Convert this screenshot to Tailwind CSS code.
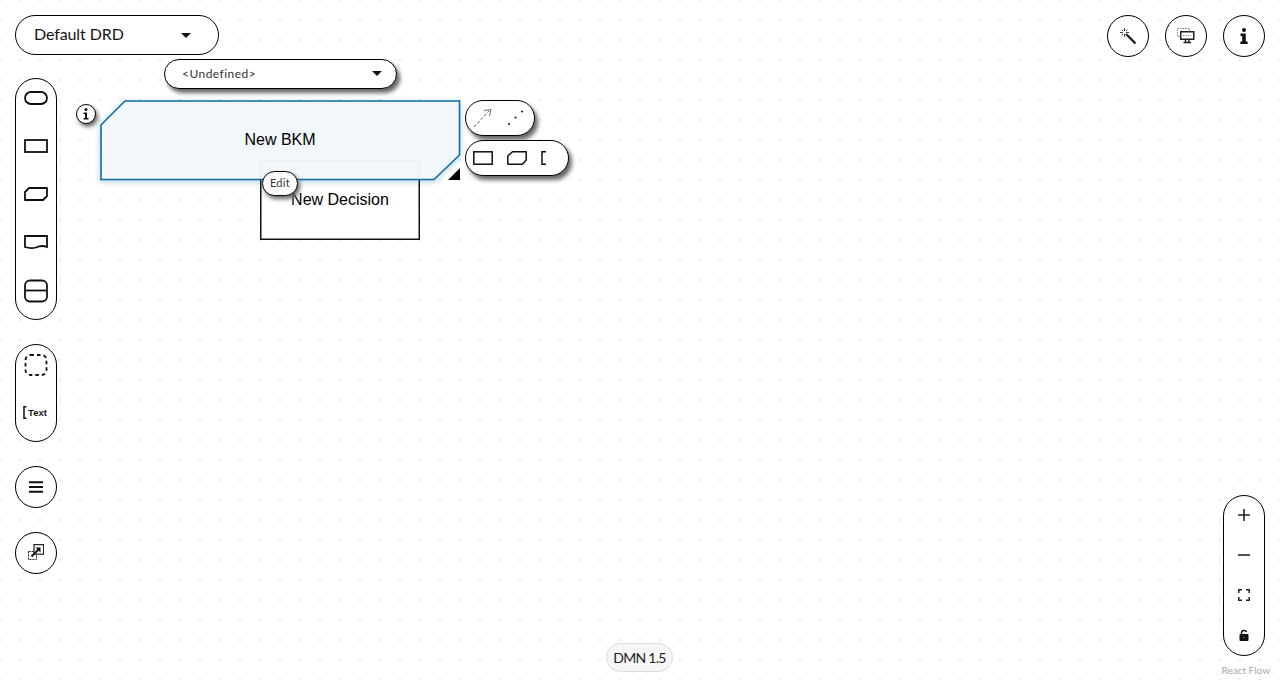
<!DOCTYPE html>
<html lang="en">
<head>
  <meta charset="UTF-8" />
  <title>DMN Editor</title>
  <script src="https://cdn.jsdelivr.net/npm/@tailwindcss/browser@4"></script>
</head>
<body class="bg-white text-[#151515] font-['Lato',sans-serif]">

<div class="relative w-[1280px] h-[680px] overflow-hidden bg-white bg-[radial-gradient(circle,#e9e9e9_1px,transparent_1px)] bg-[size:20px_20px] bg-[position:-10px_-10px]">

  <!-- Nodes on the canvas -->
  <svg class="absolute left-0 top-0" width="1280" height="680">
    <rect x="260.75" y="160.75" width="158.5" height="78.5" fill="#fff" stroke="#111" stroke-width="1.5"/>
    <polygon points="101,125 125,101 459.5,101 459.5,155 434,179.5 101,179.5" fill="#f5f9fc" fill-opacity="0.96" stroke="#0d6ea8" stroke-width="1.6" style="filter: drop-shadow(0 2px 3px rgba(13,110,168,.3))"/>
    <polygon points="448,180 460,180 460,168" fill="#000"/>
  </svg>
  <div class="absolute left-[100px] top-[100px] w-[360px] h-[80px] flex items-center justify-center font-['Liberation_Sans',sans-serif] text-base text-black">New BKM</div>
  <div class="absolute left-[260px] top-[180px] w-[160px] pt-[8px] text-center font-['Liberation_Sans',sans-serif] text-base text-black">New Decision</div>

  <!-- DRD selector -->
  <div class="absolute left-[15px] top-[15px] w-[204px] h-[40px] border border-black rounded-[20px] bg-white flex items-center justify-between pl-[18px] pr-[27px] text-base tracking-[-0.1px]">
    <span class="-mt-[2px]">Default DRD</span>
    <span class="w-0 h-0 border-x-[5px] border-x-transparent border-t-[5px] border-t-[#151515]"></span>
  </div>

  <!-- Left palette -->
  <div class="absolute left-[15px] top-[78px] flex flex-col gap-[24px] w-[42px]">
    <div class="h-[242px] border border-black rounded-[21px] bg-white flex flex-col items-center gap-[10px]">
      <div class="h-[38px] flex items-center"><svg width="24" height="14" viewBox="0 0 24 14"><rect x="1" y="1" width="22" height="12" rx="6" fill="none" stroke="#111" stroke-width="1.8"/></svg></div>
      <div class="h-[38px] flex items-center"><svg width="24" height="14" viewBox="0 0 24 14"><rect x="1" y="1" width="22" height="12" fill="none" stroke="#111" stroke-width="1.8"/></svg></div>
      <div class="h-[38px] flex items-center"><svg width="24" height="14" viewBox="0 0 24 14"><path d="M5 1H23V9L19 13H1V5Z" fill="none" stroke="#111" stroke-width="1.8" stroke-linejoin="round"/></svg></div>
      <div class="h-[38px] flex items-center"><svg width="24" height="14" viewBox="0 0 24 14"><path d="M1 1H23V12C18 10 15 11 12 12.5C8 13.5 4 13 1 12Z" fill="none" stroke="#111" stroke-width="1.8"/></svg></div>
      <div class="h-[40px] flex items-center"><svg width="24" height="24" viewBox="0 0 24 24"><rect x="1" y="1.5" width="22" height="21" rx="5" fill="none" stroke="#111" stroke-width="1.8"/><path d="M1 11.5H23" stroke="#111" stroke-width="1.8"/></svg></div>
    </div>
    <div class="h-[98px] border border-black rounded-[21px] bg-white flex flex-col items-center pt-[1px] gap-[9px]">
      <div class="h-[38px] flex items-center"><svg width="24" height="24" viewBox="0 0 24 24"><rect x="1.5" y="2" width="21" height="20" rx="5" fill="none" stroke="#111" stroke-width="1.8" stroke-dasharray="3.5 3"/></svg></div>
      <div class="h-[38px] flex items-center gap-[1px] -ml-[2px]">
        <svg width="4" height="13" viewBox="0 0 4 13"><path d="M3.5 .7H1V12.3H3.5" fill="none" stroke="#111" stroke-width="1.5"/></svg>
        <span class="text-[9.5px] font-bold leading-none font-['Liberation_Sans',sans-serif] mt-[1px]">Text</span>
      </div>
    </div>
    <div class="h-[42px] border border-black rounded-full bg-white flex items-center justify-center">
      <svg width="14" height="12" viewBox="0 0 14 12"><path d="M0 1.2H14M0 6H14M0 10.8H14" stroke="#111" stroke-width="2"/></svg>
    </div>
    <div class="h-[42px] border border-black rounded-full bg-white flex items-center justify-center">
      <svg class="-mt-[3px]" width="16" height="16" viewBox="0 0 16 16"><rect x=".5" y="7.5" width="8" height="8" fill="none" stroke="#222" stroke-width="1" stroke-dasharray="2 1"/><rect x="6" y=".6" width="9.6" height="9.6" fill="#fff" stroke="#222" stroke-width="1.2"/><path d="M3.5 12.5L11 5" stroke="#111" stroke-width="2"/><path d="M7.5 3.5H12.5V8.5Z" fill="#111"/></svg>
    </div>
  </div>

  <!-- Node selector -->
  <div class="absolute left-[164px] top-[59px] w-[233px] h-[30px] border border-black rounded-[15px] bg-white shadow-[3px_4px_4px_#666] flex items-center justify-between pl-[17px] pr-[14px] text-[12px] tracking-[0.45px] text-[#333]">
    <span>&lt;Undefined&gt;</span>
    <span class="-mt-[1px] w-0 h-0 border-x-[5px] border-x-transparent border-t-[5px] border-t-[#151515]"></span>
  </div>

  <!-- Info badge on node -->
  <div class="absolute left-[76px] top-[104px] w-[20px] h-[20px] border border-black rounded-full bg-white shadow-[2px_3px_4px_#666] flex items-center justify-center">
    <svg width="6" height="12" viewBox="0 0 6 12"><circle cx="3" cy="1.6" r="1.5" fill="#111"/><path d="M.5 4.4H4V10H5.5V11.6H.5V10H2V6H.5Z" fill="#111"/></svg>
  </div>

  <!-- Edit badge -->
  <div class="absolute left-[262px] top-[171px] w-[36px] h-[25px] border border-black rounded-[13px] bg-white shadow-[2px_3px_4px_#666] flex items-center justify-center text-[11px] tracking-[0.3px] text-[#333]">Edit</div>

  <!-- Outgoing edges -->
  <div class="absolute left-[465px] top-[100px] w-[70px] h-[36px] border border-black rounded-[18px] bg-white shadow-[3px_4px_4px_#666] flex items-center gap-[14px] pl-[7px]">
    <svg width="20" height="20" viewBox="0 0 20 20"><path d="M1 19L16 3" stroke="#444" stroke-width=".9" stroke-dasharray="3 2"/><path d="M11 2.5L18 1.5L16.5 8" fill="none" stroke="#444" stroke-width=".8"/></svg>
    <svg width="16" height="16" viewBox="0 0 16 16"><circle cx="2" cy="14" r="1.1" fill="#222"/><circle cx="8.5" cy="7.5" r="1.1" fill="#222"/><circle cx="15" cy="1.5" r="1.1" fill="#222"/></svg>
  </div>

  <!-- Node morphing -->
  <div class="absolute left-[465px] top-[140px] w-[104px] h-[36px] border border-black rounded-[18px] bg-white shadow-[3px_4px_4px_#666] flex items-center gap-[14px] pl-[7px]">
    <svg width="20" height="14" viewBox="0 0 20 14"><rect x=".8" y=".8" width="18.4" height="12.4" fill="none" stroke="#111" stroke-width="1.5"/></svg>
    <svg width="20" height="14" viewBox="0 0 20 14"><path d="M5.5 .8H19.2V9L15.5 13.2H.8V5Z" fill="none" stroke="#111" stroke-width="1.5" stroke-linejoin="round"/></svg>
    <svg width="6" height="14" viewBox="0 0 6 14"><path d="M5 .8H1V13.2H5" fill="none" stroke="#111" stroke-width="1.5"/></svg>
  </div>

  <!-- Top right actions -->
  <div class="absolute left-[1107px] top-[15px] flex gap-[16px]">
    <div class="w-[42px] h-[42px] border border-black rounded-full bg-white flex items-center justify-center">
      <svg width="18" height="18" viewBox="0 0 18 18"><path d="M7 7L16.5 16.5" stroke="#222" stroke-width="2.4"/><path d="M5.5 1V4M5.5 7V10M1 5.5H4M7 5.5H10M2.5 2.5L4 4M7 7L8.5 8.5M8.5 2.5L7 4M4 7L2.5 8.5" stroke="#444" stroke-width="1"/></svg>
    </div>
    <div class="w-[42px] h-[42px] border border-black rounded-full bg-white flex items-center justify-center">
      <svg width="18" height="16" viewBox="0 0 18 16"><rect x=".5" y=".5" width="12" height="8" fill="none" stroke="#777" stroke-width=".9" stroke-dasharray="1.5 1"/><rect x="3" y="3" width="14.5" height="9" fill="#222"/><rect x="4.5" y="4.5" width="11.5" height="6" fill="#fff"/><path d="M6 7.5H14" stroke="#888" stroke-dasharray="1.5 1"/><path d="M8.5 12V14M12 12V14M6.5 14.5H14" stroke="#222" stroke-width="1.4"/></svg>
    </div>
    <div class="w-[42px] h-[42px] border border-black rounded-full bg-white flex items-center justify-center">
      <svg width="8" height="16" viewBox="0 0 8 16"><circle cx="4" cy="2" r="2" fill="#111"/><path d="M.5 5.5H5.8V13.5H7.6V16H.4V13.5H2.2V8H.5Z" fill="#111"/></svg>
    </div>
  </div>

  <!-- Zoom controls -->
  <div class="absolute left-[1223px] top-[495px] w-[42px] h-[161px] border border-black rounded-[21px] bg-white flex flex-col items-center">
    <div class="h-[38px] w-full flex items-center justify-center"><svg width="12" height="12" viewBox="0 0 12 12"><path d="M6 0V12M0 6H12" stroke="#222" stroke-width="1.6"/></svg></div>
    <div class="h-[41px] w-full flex items-center justify-center"><svg width="12" height="2" viewBox="0 0 12 2"><path d="M0 1H12" stroke="#222" stroke-width="1.6"/></svg></div>
    <div class="h-[39px] w-full flex items-center justify-center"><svg width="12" height="12" viewBox="0 0 12 12"><path d="M.8 4V.8H4M8 .8H11.2V4M11.2 8V11.2H8M4 11.2H.8V8" fill="none" stroke="#222" stroke-width="1.5"/></svg></div>
    <div class="h-[41px] w-full flex items-center justify-center"><svg width="10" height="12" viewBox="0 0 10 12"><path d="M2.5 6V3.5C2.5 1 7 .7 7.6 3" fill="none" stroke="#111" stroke-width="1.4"/><rect x=".5" y="5" width="9" height="7" rx="1" fill="#111"/><circle cx="5" cy="8.5" r=".8" fill="#777"/></svg></div>
  </div>
  <div class="absolute right-[10px] top-[664px] text-[10px] leading-[12px] text-[#a8a8b0]">React Flow</div>

  <!-- Version -->
  <div class="absolute left-[606px] top-[643px] w-[67px] h-[29px] border border-[#ddd] rounded-[15px] bg-[#f6f6f6] flex items-center justify-center text-[14px] tracking-[-0.7px] text-[#222]">DMN 1.5</div>

</div>

</body>
</html>
